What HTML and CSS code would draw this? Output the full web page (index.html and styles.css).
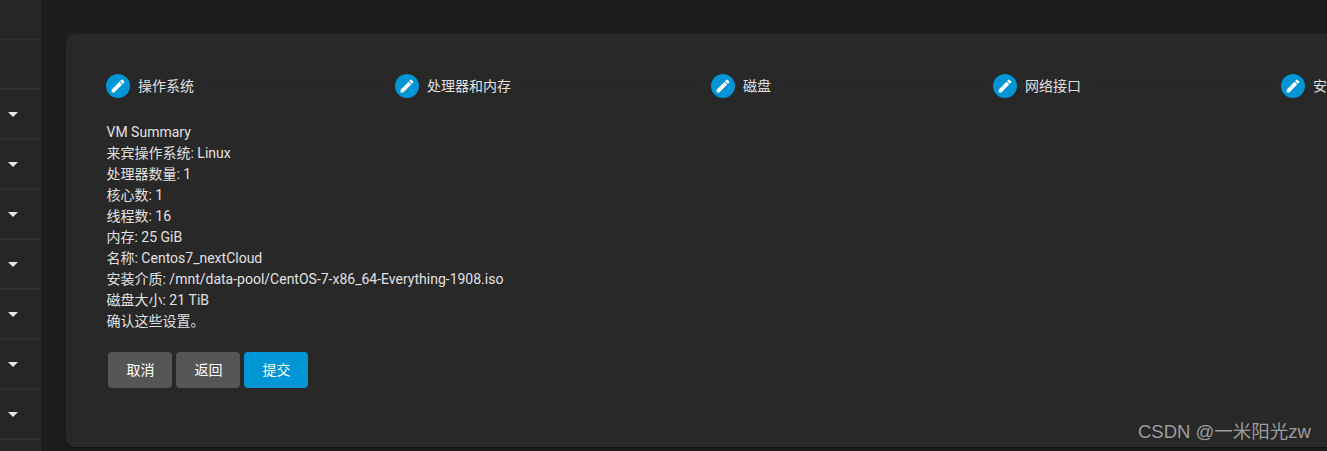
FILE: index.html
```html
<!DOCTYPE html>
<html lang="en">
<head>
  <meta charset="UTF-8" />
  <title>VM Summary</title>
  <link rel="stylesheet" href="styles.css">
</head>
<body>
  <aside class="sidebar">
    <div class="nav-top"></div>
    <div class="nav-row nav-blank"></div>
    <div class="nav-row"><span class="caret"></span></div>
    <div class="nav-row"><span class="caret"></span></div>
    <div class="nav-row"><span class="caret"></span></div>
    <div class="nav-row"><span class="caret"></span></div>
    <div class="nav-row"><span class="caret"></span></div>
    <div class="nav-row"><span class="caret"></span></div>
    <div class="nav-row"><span class="caret"></span></div>
  </aside>

  <main class="content">
    <section class="card">
      <div class="stepper">
        <div class="step">
          <svg class="step-icon" viewBox="0 0 24 24"><circle cx="12" cy="12" r="12" /><path d="M5.6 15.7v2.7h2.7l7.9-7.9-2.7-2.7zM18.2 8.6a.75.75 0 0 0 0-1.1l-1.7-1.7a.75.75 0 0 0-1.1 0l-1.3 1.3 2.8 2.8z" /></svg>
          <span class="step-label">操作系统</span>
          <span class="step-line"></span>
        </div>
        <div class="step">
          <svg class="step-icon" viewBox="0 0 24 24"><circle cx="12" cy="12" r="12" /><path d="M5.6 15.7v2.7h2.7l7.9-7.9-2.7-2.7zM18.2 8.6a.75.75 0 0 0 0-1.1l-1.7-1.7a.75.75 0 0 0-1.1 0l-1.3 1.3 2.8 2.8z" /></svg>
          <span class="step-label">处理器和内存</span>
          <span class="step-line"></span>
        </div>
        <div class="step">
          <svg class="step-icon" viewBox="0 0 24 24"><circle cx="12" cy="12" r="12" /><path d="M5.6 15.7v2.7h2.7l7.9-7.9-2.7-2.7zM18.2 8.6a.75.75 0 0 0 0-1.1l-1.7-1.7a.75.75 0 0 0-1.1 0l-1.3 1.3 2.8 2.8z" /></svg>
          <span class="step-label">磁盘</span>
          <span class="step-line"></span>
        </div>
        <div class="step">
          <svg class="step-icon" viewBox="0 0 24 24"><circle cx="12" cy="12" r="12" /><path d="M5.6 15.7v2.7h2.7l7.9-7.9-2.7-2.7zM18.2 8.6a.75.75 0 0 0 0-1.1l-1.7-1.7a.75.75 0 0 0-1.1 0l-1.3 1.3 2.8 2.8z" /></svg>
          <span class="step-label">网络接口</span>
          <span class="step-line"></span>
        </div>
        <div class="step">
          <svg class="step-icon" viewBox="0 0 24 24"><circle cx="12" cy="12" r="12" /><path d="M5.6 15.7v2.7h2.7l7.9-7.9-2.7-2.7zM18.2 8.6a.75.75 0 0 0 0-1.1l-1.7-1.7a.75.75 0 0 0-1.1 0l-1.3 1.3 2.8 2.8z" /></svg>
          <span class="step-label">安装</span>
        </div>
      </div>

      <div class="summary">
        <div>VM Summary</div>
        <div>来宾操作系统: Linux</div>
        <div>处理器数量: 1</div>
        <div>核心数: 1</div>
        <div>线程数: 16</div>
        <div>内存: 25 GiB</div>
        <div>名称: Centos7_nextCloud</div>
        <div>安装介质: /mnt/data-pool/CentOS-7-x86_64-Everything-1908.iso</div>
        <div>磁盘大小: 21 TiB</div>
        <div>确认这些设置。</div>
      </div>

      <div class="actions">
        <button class="btn">取消</button>
        <button class="btn">返回</button>
        <button class="btn btn-primary">提交</button>
      </div>
    </section>
  </main>

  <div class="watermark">CSDN @一米阳光zw</div>
</body>
</html>
```

FILE: styles.css
```css
html, body {
  height: 100%;
}

body {
  margin: 0;
  height: 451px;
  overflow: hidden;
  display: flex;
  background-color: #1d1d1d;
  color: #e0e0e0;
  font-family: Roboto, "Noto Sans CJK SC", sans-serif;
  font-size: 14px;
}

.sidebar {
  width: 41px;
  flex-shrink: 0;
  background-color: #262626;
}

.nav-top {
  height: 39px;
  border-bottom: 1px solid #303030;
}

.nav-row {
  height: 48px;
  border-bottom: 2px solid #303030;
  display: flex;
  align-items: center;
  padding-left: 8px;
}

.caret {
  width: 0;
  height: 0;
  border-left: 5px solid transparent;
  border-right: 5px solid transparent;
  border-top: 5px solid #e6e6e6;
}

.content {
  flex: 1;
  min-width: 0;
  padding: 34px 0 4px 25px;
}

.card {
  height: 413px;
  box-sizing: border-box;
  background-color: #282828;
  border-radius: 8px 0 0 8px;
  box-shadow: 0 1px 2px rgba(0, 0, 0, 0.5);
  padding: 40px 0 0 40px;
  overflow: hidden;
}

.stepper {
  display: grid;
  grid-template-columns: 289px 316px 282px 288px 1fr;
  height: 24px;
  margin-bottom: 24px;
}

.step {
  display: flex;
  align-items: center;
  min-width: 0;
}

.step-icon {
  width: 24px;
  height: 24px;
  flex-shrink: 0;
  fill: #fff;
}

.step-icon circle {
  fill: #0095d5;
}

.step-label {
  margin: 0 0 1px 8px;
  line-height: 20px;
  white-space: nowrap;
}

.step-line {
  flex: 1;
  height: 1px;
  margin: 0 8px;
  background-color: #222;
}

.summary {
  margin-left: 0.5px;
  line-height: 21px;
}

.actions {
  display: flex;
  gap: 4px;
  margin: 20px 0 0 2px;
}

.btn {
  width: 64px;
  height: 36px;
  padding: 0 0 3px 1px;
  border: none;
  border-radius: 4px;
  background-color: #565656;
  color: #fff;
  font: inherit;
}

.btn-primary {
  background-color: #0095d5;
}

.watermark {
  position: absolute;
  left: 1138px;
  top: 419px;
  color: #9c9c9c;
  font-family: "Liberation Sans", "Noto Sans CJK SC", sans-serif;
  font-size: 18.5px;
  line-height: 26px;
  white-space: nowrap;
}
```
